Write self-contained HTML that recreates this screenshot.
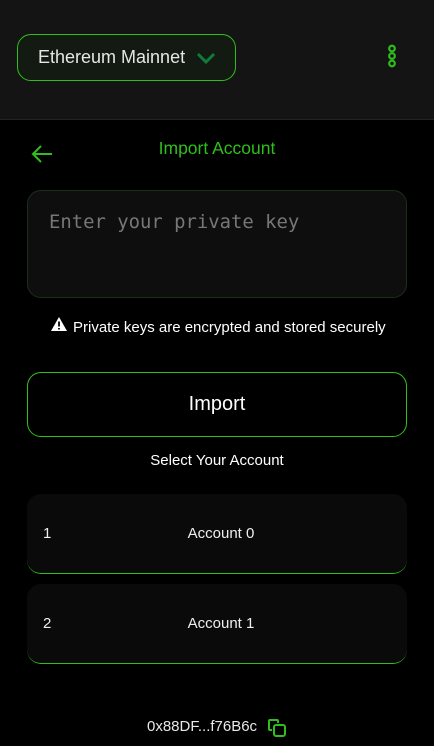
<!DOCTYPE html>
<html><head><meta charset="utf-8"><style>
*{box-sizing:border-box;margin:0;padding:0}
body{width:434px;height:746px;background:#000;font-family:"Liberation Sans",sans-serif;position:relative;overflow:hidden;color:#fff}
.hdr{position:absolute;left:0;top:0;width:434px;height:120px;background:#141414;border-bottom:1px solid #1e261e}
.net{position:absolute;left:17px;top:34px;width:219px;height:47px;border:1.5px solid #2fbf1a;border-radius:14px;background:#121a12;color:#e6e6e6;font-size:18px;line-height:45px;padding-left:20px}
.abs{position:absolute}
.ta{position:absolute;left:27px;top:190px;width:380px;height:108px;border:1px solid #1c2e1a;border-radius:14px;background:#0e0e0e;color:#777;font-family:"DejaVu Sans Mono","Liberation Mono",monospace;font-size:18.9px;padding:20px 0 0 21px}
.btn{position:absolute;left:27px;top:372px;width:380px;height:65px;border:1px solid #2fbf1a;border-radius:14px;font-size:20px;text-align:center;line-height:63px;color:#fff}
.acc{position:absolute;left:27px;width:380px;height:80px;border-radius:14px;background:#0a0a0a;border-bottom:1px solid #2fbf1a;font-size:15px;color:#eee}
.acc .n{position:absolute;left:16px;top:31px}
.acc .t{position:absolute;left:0;width:100%;text-align:center;top:31px;padding-left:8px}
</style></head><body>
<div class="hdr">
<div class="net">Ethereum Mainnet
<svg class="abs" style="left:178px;top:17px" width="20" height="12" viewBox="0 0 20 12"><path d="M2 2 L10 10 L18 2" fill="none" stroke="#0f7a3a" stroke-width="3"/></svg></div>
<svg class="abs" style="left:386px;top:44px" width="12" height="24" viewBox="0 0 12 24"><g fill="none" stroke="#2fbf1a" stroke-width="2.2"><circle cx="6" cy="4.5" r="2.8"/><circle cx="6" cy="12" r="2.8"/><circle cx="6" cy="19.5" r="2.8"/></g></svg>
</div>
<svg class="abs" style="left:30px;top:144px" width="24" height="20" viewBox="0 0 24 20"><path d="M22 10 H3 M11 2 L3 10 L11 18" fill="none" stroke="#2fbf1a" stroke-width="2"/></svg>
<div class="abs" style="left:0;width:434px;text-align:center;top:138px;font-size:17.5px;color:#2fbf1a">Import Account</div>
<div class="ta">Enter your private key</div>
<svg class="abs" style="left:50px;top:316px" width="18" height="16" viewBox="0 0 18 16"><path d="M9 1 L17 15 H1 Z" fill="#fff"/><path d="M9 5.5 V10.5 M9 12 V13.5" stroke="#000" stroke-width="1.8"/></svg>
<div class="abs" style="left:73px;top:319px;font-size:15px;color:#fff">Private keys are encrypted and stored securely</div>
<div class="btn">Import</div>
<div class="abs" style="left:0;width:434px;text-align:center;top:452px;font-size:15px;color:#fff">Select Your Account</div>
<div class="acc" style="top:494px"><span class="n">1</span><span class="t">Account 0</span></div>
<div class="acc" style="top:584px"><span class="n">2</span><span class="t">Account 1</span></div>
<div class="abs" style="left:147px;top:718px;font-size:15px;color:#e8e8e8">0x88DF...f76B6c</div>
<svg class="abs" style="left:267px;top:718px" width="20" height="20" viewBox="0 0 20 20"><g fill="none" stroke="#2fbf1a" stroke-width="2"><path d="M5 12 H3 Q2 12 2 11 V3 Q2 2 3 2 H10 Q11 2 11 3 V5"/><rect x="7" y="7" width="11" height="11" rx="2"/></g></svg>
</body></html>
